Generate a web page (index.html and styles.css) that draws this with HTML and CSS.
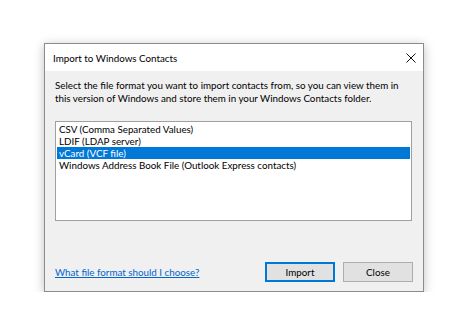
FILE: index.html
```html
<!DOCTYPE html>
<html lang="en">
<head>
  <meta charset="UTF-8">
  <title>Import to Windows Contacts</title>
  <link rel="stylesheet" href="styles.css">
</head>
<body>
  <div class="dialog">
    <div class="titlebar">
      <span class="title">Import to Windows Contacts</span>
      <svg class="close-x" width="10" height="10" viewBox="0 0 10 10">
        <path d="M0.5 0.5 L9.5 9.5 M9.5 0.5 L0.5 9.5" stroke="#111" stroke-width="1"/>
      </svg>
    </div>
    <div class="content">
      <p class="intro">Select the file format you want to import contacts from, so you can view them in this version of Windows and store them in your Windows Contacts folder.</p>
      <ul class="listbox">
        <li>CSV (Comma Separated Values)</li>
        <li>LDIF (LDAP server)</li>
        <li class="selected">vCard (VCF file)</li>
        <li>Windows Address Book File (Outlook Express contacts)</li>
      </ul>
      <div class="footer">
        <a href="#" class="help">What file format should I choose?</a>
        <button class="btn default">Import</button>
        <button class="btn">Close</button>
      </div>
    </div>
  </div>
</body>
</html>
```

FILE: styles.css
```css
body {
  margin: 0;
  padding: 43px 0 0 44px;
  background: #ffffff;
  font-family: Lato, "Liberation Sans", sans-serif;
  font-size: 9.8px;
  color: #000;
}

.dialog {
  width: 378px;
  border: 1px solid #8c8c8c;
  background: #f0f0f0;
  box-shadow: 0 2px 10px rgba(0,0,0,0.25);
}

.titlebar {
  height: 27px;
  background: #ffffff;
  display: flex;
  align-items: center;
  justify-content: space-between;
  padding: 0 7px 0 8px;
}

.content {
  padding: 8px 10px 9px 10px;
}

.intro {
  margin: 0;
  line-height: 13px;
  width: 356px;
}

.listbox {
  list-style: none;
  margin: 16px 0 0 0;
  padding: 1px;
  height: 96px;
  border: 1px solid #a0a0a0;
  background: #ffffff;
  width: 353px;
}

.listbox li {
  height: 12px;
  line-height: 12px;
  padding-left: 2px;
  white-space: nowrap;
}

.listbox li.selected {
  background: #0078d7;
  color: #ffffff;
}

.footer {
  display: flex;
  align-items: center;
  margin-top: 41px;
}

.help {
  color: #0066cc;
  flex: 1;
}

.btn {
  width: 70px;
  height: 20px;
  margin-left: 8px;
  padding: 0;
  background: #e1e1e1;
  border: 1px solid #adadad;
  font-family: Lato, "Liberation Sans", sans-serif;
  font-size: 9.8px;
  color: #000;
}

.btn.default {
  border: 1px solid #0078d7;
  box-shadow: inset 0 0 0 1px #0078d7;
}
```
